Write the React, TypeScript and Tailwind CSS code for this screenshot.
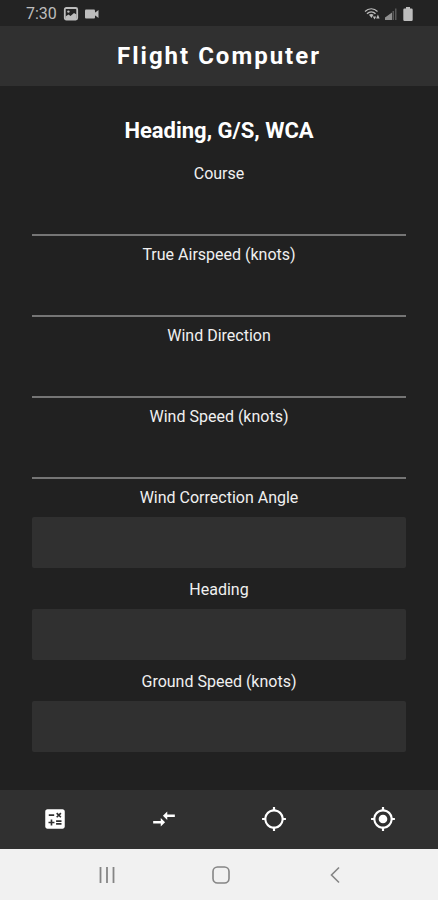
import { useState } from 'react';
import { MdCalculate, MdGpsNotFixed, MdMyLocation } from 'react-icons/md';

const inputs = [
  { id: 'course', label: 'Course' },
  { id: 'airspeed', label: 'True Airspeed (knots)' },
  { id: 'wind-direction', label: 'Wind Direction' },
  { id: 'wind-speed', label: 'Wind Speed (knots)' },
];

const results = [
  { id: 'wca', label: 'Wind Correction Angle' },
  { id: 'heading', label: 'Heading' },
  { id: 'ground-speed', label: 'Ground Speed (knots)' },
];

// Opposing arrows with heavier shafts than the stock compare icon
function ArrowsIcon({ className }: { className?: string }) {
  return (
    <svg className={className} viewBox="0 0 24 24" fill="currentColor" aria-hidden="true">
      <path d="M9 13.8H2v2.4h7v2.8l4-4-4-4zM15 10.2h7V7.8h-7V5l-4 4 4 4z" />
    </svg>
  );
}

const tabs = [
  { name: 'Calculator', Icon: MdCalculate },
  { name: 'Conversions', Icon: ArrowsIcon },
  { name: 'Wind', Icon: MdGpsNotFixed },
  { name: 'Heading', Icon: MdMyLocation },
];

function StatusBar() {
  return (
    <div className="flex h-[26px] items-center justify-between bg-[#232323] pt-0.5 pr-6 pl-[26px] text-[#bdbdbd]">
      <div className="flex items-center gap-1.5">
        <span className="text-base leading-6">7:30</span>
        <svg className="h-3.5 w-4" viewBox="0 0 16 14" fill="none" aria-hidden="true">
          <rect x="1.8" y="1" width="12.4" height="11.6" rx="1.5" stroke="currentColor" strokeWidth="1.8" />
          <path d="M2.5 12V9.5l3-2 2 1.5 3.5-3 2.5 1.5V12z" fill="currentColor" />
          <circle cx="5.4" cy="4.6" r="1.2" fill="currentColor" />
        </svg>
        <svg className="h-3.5 w-3.5" viewBox="0 0 14 14" fill="currentColor" aria-hidden="true">
          <rect x="0" y="2.5" width="10" height="9" rx="1" />
          <path d="M9.5 6L13.5 3v8l-4-3z" />
        </svg>
      </div>
      <div className="flex items-center gap-1">
        <svg className="h-3.5 w-4" viewBox="0 0 16 14" fill="none" stroke="currentColor" aria-hidden="true">
          <path d="M1 4.5C4.5 0.8 10 0.8 13.5 4.5" strokeWidth="1.2" />
          <path d="M3 6.8C5.5 4.2 9 4.2 11.5 6.8" strokeWidth="1.4" />
          <path d="M5 7.8c1.5-1.2 3-1.2 4.5 0L7.5 11z" fill="currentColor" stroke="none" />
          <path d="M8.8 9.5h3.4l-1.7 3zM12.2 11.5h3.4l-1.7-4z" fill="currentColor" stroke="none" />
        </svg>
        <svg className="h-3.5 w-3.5" viewBox="0 0 14 14" fill="currentColor" aria-hidden="true">
          <path d="M1 13v-2.5l7-5V13z" opacity="0.7" />
          <rect x="8.5" y="4" width="1.5" height="9" opacity="0.35" />
          <rect x="11" y="1.5" width="1.5" height="11.5" opacity="0.35" />
        </svg>
        <svg className="h-3.5 w-3" viewBox="0 0 12 14" fill="currentColor" aria-hidden="true">
          <path d="M4 0h4v1.5h1.5a1.2 1.2 0 0 1 1.2 1.2v10a1.2 1.2 0 0 1-1.2 1.2h-7a1.2 1.2 0 0 1-1.2-1.2v-10a1.2 1.2 0 0 1 1.2-1.2H4z" />
        </svg>
      </div>
    </div>
  );
}

function SystemNav() {
  return (
    <div className="flex h-[51px] items-center justify-center gap-[90px] bg-[#f1f1f1] pl-1 text-[#858585]">
      <button type="button" aria-label="Recent apps">
        <svg className="h-6 w-6" viewBox="0 0 24 24" stroke="currentColor" strokeWidth="1.8">
          <path d="M5.5 4v16M12 4v16M18.5 4v16" />
        </svg>
      </button>
      <button type="button" aria-label="Home">
        <svg className="h-6 w-6" viewBox="0 0 24 24" fill="none" stroke="currentColor" strokeWidth="1.6">
          <rect x="4" y="4" width="16" height="16" rx="4.5" />
        </svg>
      </button>
      <button type="button" aria-label="Back">
        <svg className="h-6 w-6" viewBox="0 0 24 24" fill="none" stroke="currentColor" strokeWidth="1.6">
          <path d="M16 4.5L8.5 12l7.5 7.5" />
        </svg>
      </button>
    </div>
  );
}

export default function App() {
  const [values, setValues] = useState<Record<string, string>>({});

  return (
    <div className="flex min-h-screen flex-col bg-[#212121] font-['Roboto',sans-serif] text-[#f0f0f0]">
      <StatusBar />
      <header className="flex h-[60px] items-center justify-center bg-[#303030]">
        <h1 className="text-2xl font-bold tracking-[2px] text-white">Flight Computer</h1>
      </header>

      <main className="flex-1 px-8 pt-7">
        <h2 className="mb-3.5 text-center text-[22px] leading-[34px] font-bold text-white">Heading, G/S, WCA</h2>
        {inputs.map(({ id, label }) => (
          <div key={id} className="mb-[7px] flex flex-col">
            <label htmlFor={id} className="text-center text-base leading-6">
              {label}
            </label>
            <input
              id={id}
              type="text"
              inputMode="decimal"
              value={values[id] ?? ''}
              onChange={(e) => setValues({ ...values, [id]: e.target.value })}
              className="h-[50px] border-b-2 border-[#757575] bg-transparent text-center outline-none"
            />
          </div>
        ))}
        {results.map(({ id, label }) => (
          <div key={id} className="mb-2.5 flex flex-col gap-[7px]">
            <label htmlFor={id} className="text-center text-base leading-6">
              {label}
            </label>
            <input id={id} type="text" readOnly className="h-[51px] rounded-xs bg-[#303030] text-center outline-none" />
          </div>
        ))}
      </main>

      <nav className="grid h-[59px] grid-cols-4 bg-[#303030] pb-0.5 text-white">
        {tabs.map(({ name, Icon }) => (
          <button key={name} type="button" aria-label={name} className="flex items-center justify-center">
            <Icon className="h-[26px] w-[26px]" />
          </button>
        ))}
      </nav>
      <SystemNav />
    </div>
  );
}
